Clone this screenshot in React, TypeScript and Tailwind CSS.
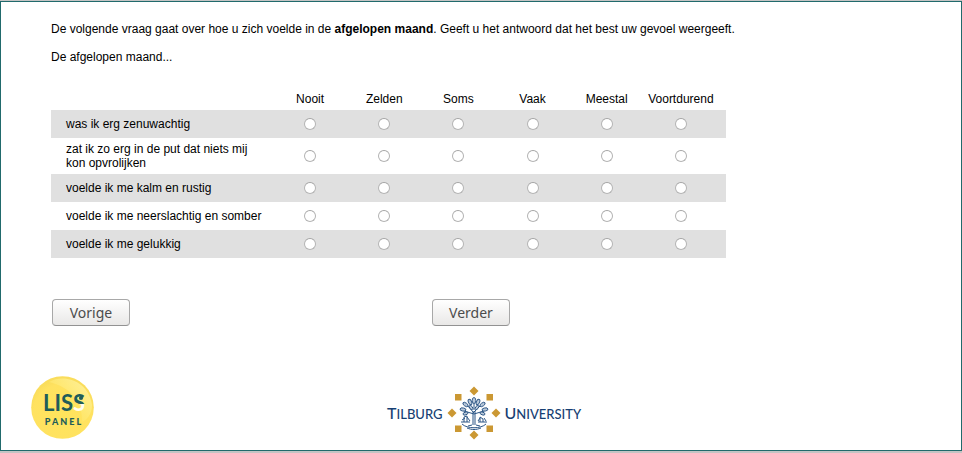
const answers = ["Nooit", "Zelden", "Soms", "Vaak", "Meestal", "Voortdurend"];

const statements = [
  "was ik erg zenuwachtig",
  "zat ik zo erg in de put dat niets mij kon opvrolijken",
  "voelde ik me kalm en rustig",
  "voelde ik me neerslachtig en somber",
  "voelde ik me gelukkig",
];

function QuestionTable() {
  return (
    <table className="mt-6 w-[675px] table-fixed border-collapse">
      <thead>
        <tr className="h-[22px]">
          <td className="w-[222px]" />
          {answers.map((answer) => (
            <th key={answer} scope="col" className="p-0 text-center font-normal">
              {answer}
            </th>
          ))}
          <td className="w-2 p-0" />
        </tr>
      </thead>
      <tbody>
        {statements.map((statement, row) => (
          <tr key={statement} className="h-7 odd:bg-[#e0e0e0]">
            <th scope="row" className="py-1 pr-2 pl-[15px] text-left font-normal">
              {statement}
            </th>
            {answers.map((answer) => (
              <td key={answer} className="p-0">
                <input
                  type="radio"
                  name={`statement-${row}`}
                  value={answer}
                  aria-label={`${statement}: ${answer}`}
                  className="mx-auto block size-3 appearance-none rounded-full border border-[#b4b4b4] border-t-[#a4a4a4] bg-white checked:border-4 checked:border-[#555]"
                />
              </td>
            ))}
            <td className="p-0" />
          </tr>
        ))}
      </tbody>
    </table>
  );
}

function NavButton({ label }: { label: string }) {
  return (
    <button
      type="button"
      className="h-[27px] w-[78px] rounded-[4px] border border-[#a8a8a8] border-b-[#929292] bg-linear-to-b from-white to-[#e9e8e7] font-['Noto_Sans',sans-serif] text-[14px] leading-5 text-[#4c4c4c]"
    >
      {label}
    </button>
  );
}

function LissLogo() {
  return (
    <svg viewBox="0 0 64 64" className="size-16" role="img" aria-label="LISS Panel">
      <defs>
        <radialGradient id="sun" cx="50%" cy="60%" r="55%">
          <stop offset="0" stopColor="#ffe45c" />
          <stop offset="0.85" stopColor="#ffe260" />
          <stop offset="1" stopColor="#fadd5c" />
        </radialGradient>
        <linearGradient id="shine" x1="1" y1="0" x2="0.3" y2="0.7">
          <stop offset="0" stopColor="#fff4a8" />
          <stop offset="1" stopColor="#ffe766" stopOpacity="0.5" />
        </linearGradient>
        <linearGradient id="split" gradientUnits="userSpaceOnUse" x1="0" y1="16" x2="0" y2="40">
          <stop offset="0.5" stopColor="#205c5a" />
          <stop offset="0.5" stopColor="#fffdf0" />
        </linearGradient>
      </defs>
      <circle cx="31.5" cy="31.5" r="31.3" fill="url(#sun)" />
      <path d="M18 6C34-3 58 6 61 29C61 38 56 44 51 46C52 25 39 11 18 6Z" fill="url(#shine)" />
      <text x="12" y="35" className="fill-[#205c5a] font-['Lato',sans-serif] text-[22px] font-bold">
        LIS<tspan fill="url(#split)">S</tspan>
      </text>
      <circle cx="50" cy="22" r="2.1" fill="#205c5a" />
      <text
        x="33"
        y="49"
        textAnchor="middle"
        className="fill-[#205c5a] font-['Lato',sans-serif] text-[9px] font-black tracking-[2px]"
      >
        PANEL
      </text>
    </svg>
  );
}

function UniversityEmblem() {
  return (
    <svg viewBox="0 0 54 54" className="size-[54px]" aria-hidden="true">
      <g fill="#cb9833">
        <path d="M27 0.5L31.5 5L27 9.5L22.5 5Z" />
        <path d="M27 44.5L31.5 49L27 53.5L22.5 49Z" />
        <path d="M5 22.5L9.5 27L5 31.5L0.5 27Z" />
        <path d="M49 22.5L53.5 27L49 31.5L44.5 27Z" />
        <path d="M8 8H14.5V14.5H8ZM39.5 8H46V14.5H39.5ZM8 39.5H14.5V46H8ZM39.5 39.5H46V46H39.5Z" />
      </g>
      <g fill="none" stroke="#2b5585" strokeWidth="1">
        <path d="M26 39V25M28 39V25M27 27L20 19M27 26L34 19M27 28L17 25M27 28L37 25M27 24V16" />
        <path d="M25 39L21 40M29 39L33 40M14 36H23M31 36H40M15 38C20 43 34 43 39 38M20 42C25 44 29 44 34 42" />
        <path d="M17 36V31L20 30V36M36 36V33L33 31V36M20 31L23 35M33 32L31 35M15 34L18 32M39 35L37 32" />
      </g>
      <g fill="#b9c8d9" stroke="#2b5585" strokeWidth="0.9">
        <ellipse cx="27" cy="14.5" rx="1.8" ry="3" />
        <ellipse cx="23" cy="16" rx="1.6" ry="2.8" transform="rotate(-25 23 16)" />
        <ellipse cx="31" cy="16" rx="1.6" ry="2.8" transform="rotate(25 31 16)" />
        <ellipse cx="18.5" cy="18.5" rx="1.6" ry="3" transform="rotate(-55 18.5 18.5)" />
        <ellipse cx="35.5" cy="18.5" rx="1.6" ry="3" transform="rotate(55 35.5 18.5)" />
        <ellipse cx="16" cy="23.5" rx="1.6" ry="3" transform="rotate(-80 16 23.5)" />
        <ellipse cx="38" cy="23.5" rx="1.6" ry="3" transform="rotate(80 38 23.5)" />
        <ellipse cx="18.5" cy="27.5" rx="1.4" ry="2.6" transform="rotate(-110 18.5 27.5)" />
        <ellipse cx="35.5" cy="27.5" rx="1.4" ry="2.6" transform="rotate(110 35.5 27.5)" />
        <ellipse cx="24" cy="21.5" rx="1.4" ry="2.4" transform="rotate(-35 24 21.5)" />
        <ellipse cx="30" cy="21.5" rx="1.4" ry="2.4" transform="rotate(35 30 21.5)" />
      </g>
    </svg>
  );
}

function UniversityLogo() {
  return (
    <div className="flex items-center gap-1 font-['Lato',sans-serif] text-[13px] leading-5 font-medium text-[#173f73]">
      <span>
        <span className="text-[16px]">T</span>ILBURG
      </span>
      <UniversityEmblem />
      <span>
        <span className="text-[16px]">U</span>NIVERSITY
      </span>
    </div>
  );
}

export default function App() {
  return (
    <div className="flex min-h-screen flex-col bg-[#c4c4c4] pt-px pb-0.5 font-['Liberation_Sans',Arial,sans-serif] text-[12px] leading-[14px] text-black">
      <main className="flex grow flex-col border border-[#216a6c] bg-white">
        <form className="pt-5 pl-[50px]">
          <p>
            De volgende vraag gaat over hoe u zich voelde in de <b>afgelopen maand</b>. Geeft u het antwoord dat het
            best uw gevoel weergeeft.
          </p>
          <p className="mt-[14px]">De afgelopen maand...</p>
          <QuestionTable />
          <div className="mt-[41px] flex gap-[302px] pl-px">
            <NavButton label="Vorige" />
            <NavButton label="Verder" />
          </div>
        </form>
        <footer className="mt-auto flex items-end gap-[292px] pb-[10px] pl-[30px]">
          <LissLogo />
          <UniversityLogo />
        </footer>
      </main>
    </div>
  );
}
